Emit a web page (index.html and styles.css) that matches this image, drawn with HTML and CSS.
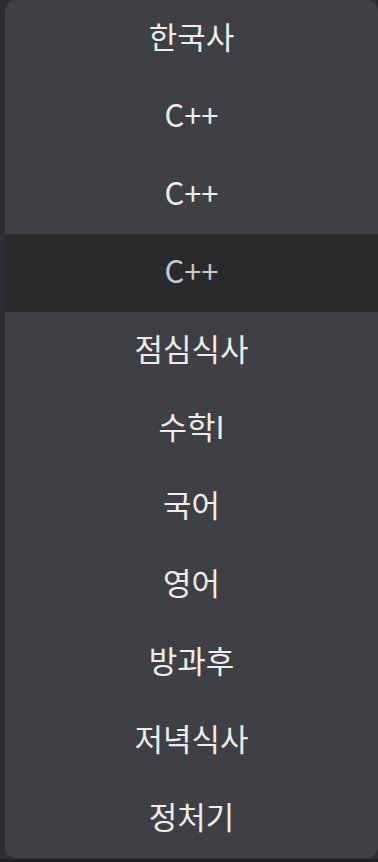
FILE: index.html
```html
<!DOCTYPE html>
<html lang="ko">
<head>
<meta charset="utf-8">
<link rel="stylesheet" href="styles.css">
</head>
<body>
<div class="page">
  <ul class="menu">
    <li class="item">한국사</li>
    <li class="item">C++</li>
    <li class="item">C++</li>
    <li class="item active">C++</li>
    <li class="item">점심식사</li>
    <li class="item">수학I</li>
    <li class="item">국어</li>
    <li class="item">영어</li>
    <li class="item">방과후</li>
    <li class="item">저녁식사</li>
    <li class="item">정처기</li>
  </ul>
</div>
</body>
</html>
```
FILE: styles.css
```css
html, body {
  margin: 0;
  padding: 0;
  background: #1f2023;
}
.page {
  width: 378px;
  height: 859px;
  background: #2d2e32;
  padding-left: 5px;
  box-sizing: border-box;
}
.menu {
  list-style: none;
  margin: 0;
  padding: 0;
  height: 858px;
  background: #3f4044;
  border-radius: 11px;
  overflow: hidden;
  display: flex;
  flex-direction: column;
}
.item {
  height: 78px;
  flex: 0 0 78px;
  box-sizing: border-box;
  padding-bottom: 8px;
  display: flex;
  align-items: center;
  justify-content: center;
  font-family: "Noto Sans CJK KR", "Noto Sans", sans-serif;
  font-size: 31px;
  color: #ededee;
}
.item.active {
  background: #2a2a2c;
  color: #c9c9ca;
}
```
